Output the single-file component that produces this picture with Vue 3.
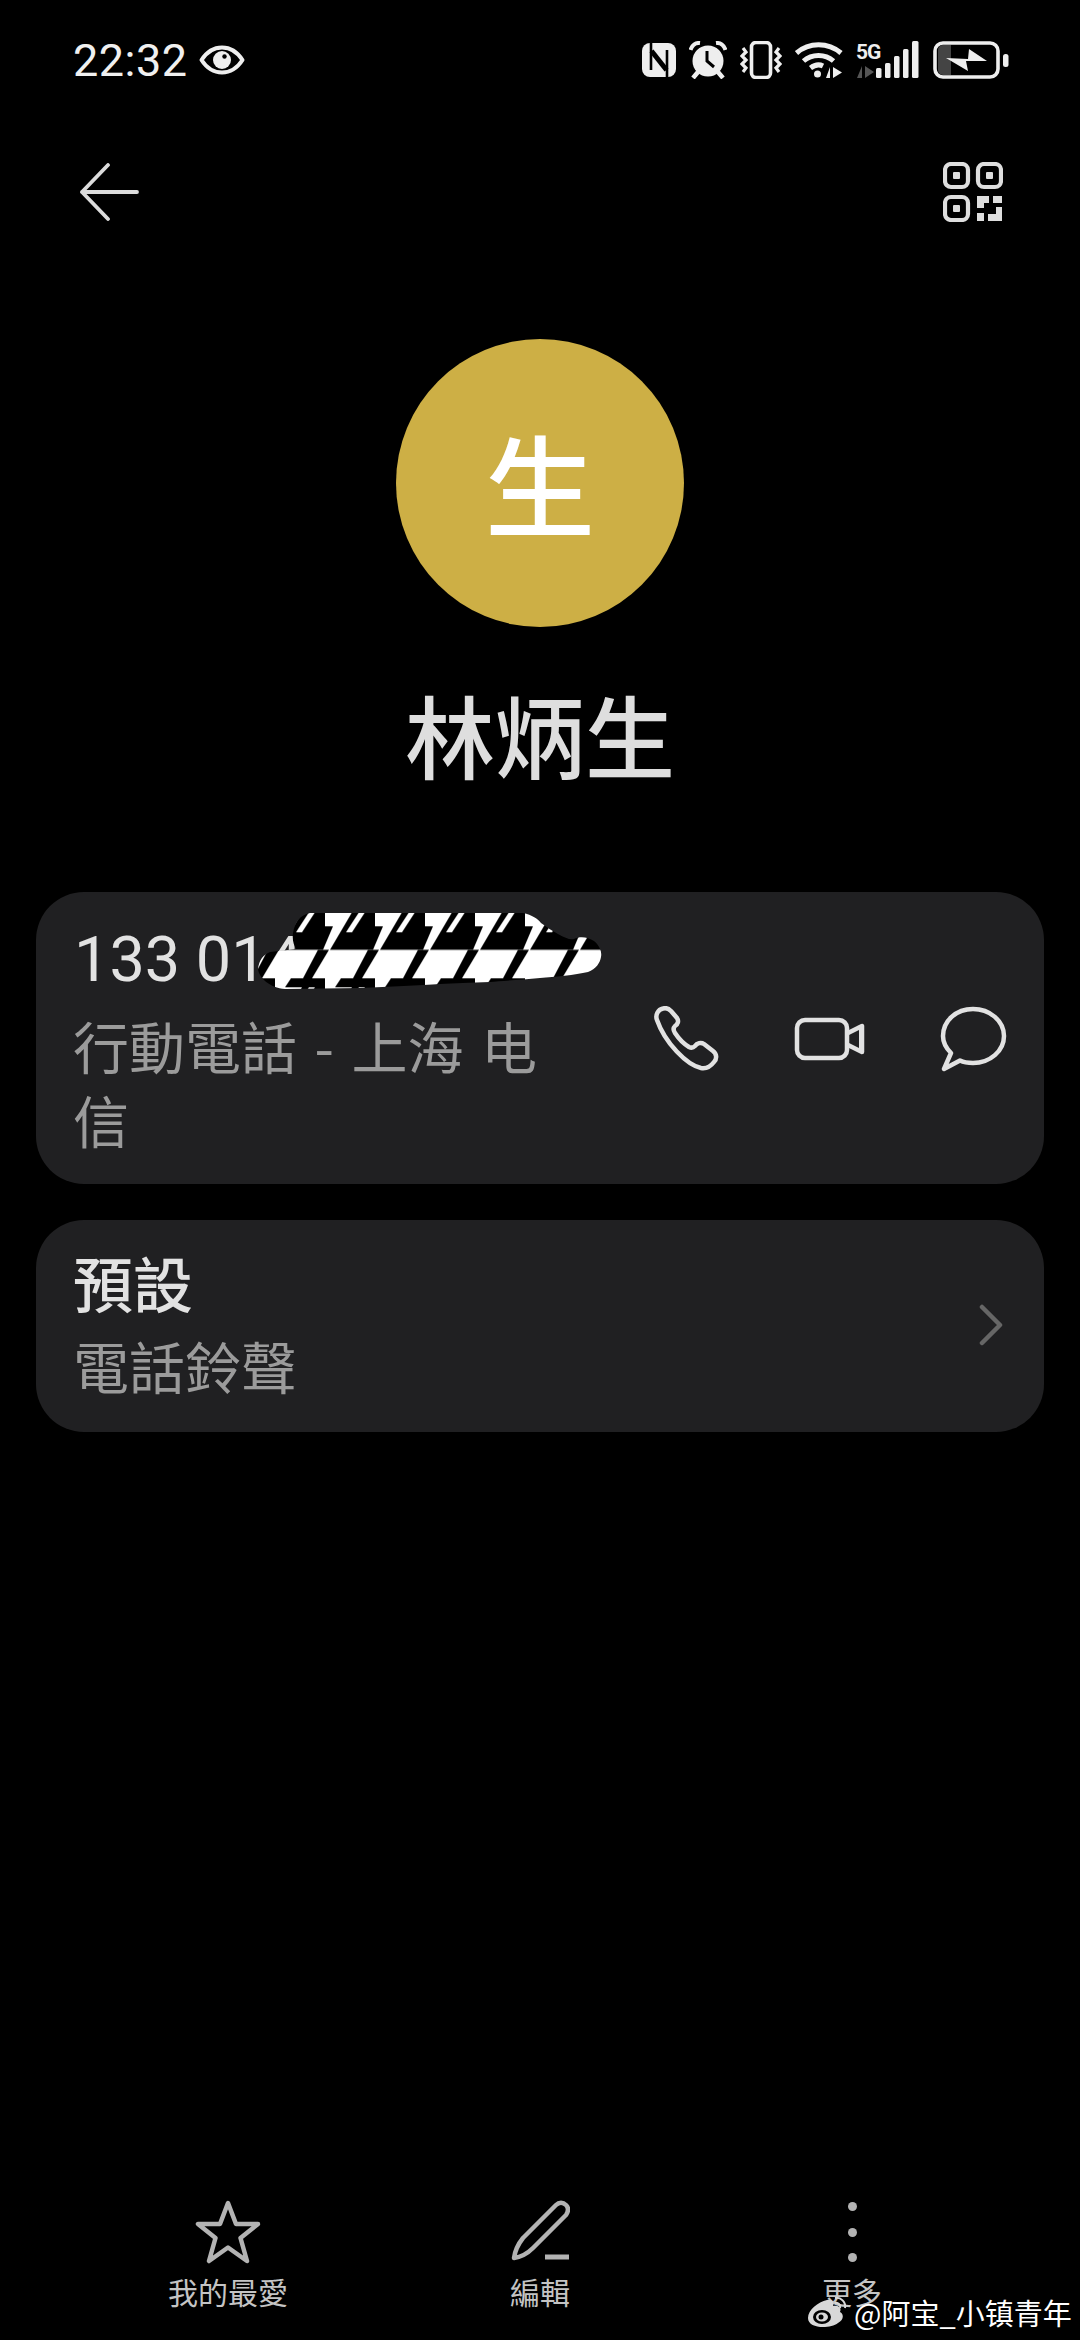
<template>
  <div class="page">
    <!-- status bar -->
    <div class="status">
      <div class="status-left">
        <span class="time">22:32</span>
        <svg class="eye" width="46" height="30" viewBox="0 0 46 30">
          <path d="M2.500 15C8 6.500 15 2.500 23 2.500S38 6.500 43.500 15C38 23.500 31 27.500 23 27.500S8 23.500 2.500 15Z" fill="none" stroke="#eee" stroke-width="4" stroke-linejoin="round" />
          <circle cx="23" cy="15" r="9" fill="#eee" />
          <circle cx="25.500" cy="11.500" r="2.200" fill="#000" />
        </svg>
      </div>
      <div class="status-right">
        <svg width="34" height="36" viewBox="0 0 34 36">
          <rect x="0" y="1" width="34" height="34" rx="8" fill="#eee" />
          <path d="M9 0V28M25 36V8" fill="none" stroke="#000" stroke-width="2.600" />
          <path d="M9.500 9L24.500 28" fill="none" stroke="#000" stroke-width="5" />
        </svg>
        <svg width="38" height="38" viewBox="0 0 38 38">
          <path d="M1.500 9C3 4 7 1.500 11 2M36.500 9C35 4 31 1.500 27 2" fill="none" stroke="#eee" stroke-width="4" />
          <circle cx="19" cy="20" r="15.500" fill="#eee" />
          <path d="M18 10V20L25 26" fill="none" stroke="#000" stroke-width="3" />
          <path d="M9 31L4 37M29 31L34 37" stroke="#eee" stroke-width="4.500" />
        </svg>
        <svg width="42" height="38" viewBox="0 0 42 38">
          <rect x="11.500" y="1.500" width="19" height="35" rx="4.500" fill="none" stroke="#eee" stroke-width="3.600" />
          <path d="M3 7L6 11L2 15L6 19L2 23L6 27L3 31M39 7L36 11L40 15L36 19L40 23L36 27L39 31" fill="none" stroke="#eee" stroke-width="3.200" />
        </svg>
        <svg width="48" height="38" viewBox="0 0 48 38">
          <path d="M1.500 12C14 1 33 1 46 12" fill="none" stroke="#eee" stroke-width="5" />
          <path d="M8.500 20C17 12.500 30 12.500 38.500 20" fill="none" stroke="#eee" stroke-width="5" />
          <path d="M15.500 27C20 23.500 25 23.500 28 25" fill="none" stroke="#eee" stroke-width="5" />
          <circle cx="22.500" cy="33" r="3.500" fill="#eee" />
          <path d="M35 26V37H31ZM38 26V37L47 31.500Z" fill="#eee" />
        </svg>
        <svg class="signal" width="64" height="38" viewBox="0 0 64 38">
          <text x="0" y="18" class="five-g">5G</text>
          <path d="M6 25V37H1ZM9 25V37L18 31Z" fill="#555" />
          <g fill="#eee">
            <rect x="20" y="27" width="5.500" height="10" rx="1.500" />
            <rect x="29" y="22" width="5.500" height="15" rx="1.500" />
            <rect x="38" y="15" width="5.500" height="22" rx="1.500" />
            <rect x="47" y="8" width="5.500" height="29" rx="1.500" />
            <rect x="56" y="0" width="6.500" height="37" rx="1.500" />
          </g>
        </svg>
        <svg width="76" height="38" viewBox="0 0 76 38">
          <rect x="2" y="2" width="63" height="34" rx="8" fill="#000" stroke="#eee" stroke-width="3.600" />
          <path d="M5 9a5 5 0 0 1 5-5H18V34H10a5 5 0 0 1-5-5Z" fill="#444" />
          <path d="M13 17L35 18L36 8L54 20L33 20L35 30Z" fill="#eee" />
          <rect x="70" y="13" width="5.500" height="13" rx="2.500" fill="#eee" />
        </svg>
      </div>
    </div>

    <!-- back / qr -->
    <div class="header">
      <svg width="60" height="58" viewBox="0 0 60 58">
        <path d="M58 29H3M29 2L3 29L29 56" fill="none" stroke="#dcdcdc" stroke-width="3.800" stroke-linecap="round" stroke-linejoin="round" />
      </svg>
      <svg width="60" height="60" viewBox="0 0 60 60">
        <g fill="none" stroke="#dedede" stroke-width="4.200">
          <rect x="2" y="2" width="23" height="23" rx="6" />
          <rect x="35" y="2" width="23" height="23" rx="6" />
          <rect x="2" y="35" width="23" height="23" rx="6" />
        </g>
        <g fill="#dedede">
          <rect x="10" y="10" width="7" height="7" rx="1" />
          <rect x="43" y="10" width="7" height="7" rx="1" />
          <rect x="10" y="43" width="7" height="7" rx="1" />
          <path d="M34 34H46V41H41V46H34ZM50 34H59V41H50ZM34 51H41V59H34ZM53 45H59V59H45V52H53Z" />
        </g>
      </svg>
    </div>

    <div class="avatar">生</div>
    <div class="name">林炳生</div>

    <!-- phone number card -->
    <div class="card card-phone">
      <div class="number">133 014</div>
      <div class="phone-row">
        <div class="sub sub-wrap">行動電話 - 上海 电信</div>
        <div class="actions">
          <div class="action">
            <svg width="66" height="66" viewBox="0 0 66 66">
              <path d="M4 14C2 9 5 3.500 10 2.500C13 1.500 16 3 18 5L24 12C26 15 25 18 22 20C20 22 20 24 22 27C26 33 31 38 36 41C38 42 40 42 42 40C44 37 48 36 51 38L60 45C64 48 64 53 61 56C58 60 54 63 48 62C34 59 12 37 4 14Z" fill="none" stroke="#e2e2e2" stroke-width="4.500" stroke-linejoin="round" />
            </svg>
          </div>
          <div class="action">
            <svg width="72" height="44" viewBox="0 0 72 44">
              <rect x="3" y="3" width="50" height="38" rx="8" fill="none" stroke="#e2e2e2" stroke-width="4.500" />
              <path d="M54 16L68 9V35L54 28" fill="none" stroke="#e2e2e2" stroke-width="4.500" stroke-linejoin="round" />
              <path d="M65 10H70V35H65Z" fill="#e2e2e2" />
            </svg>
          </div>
          <div class="action">
            <svg width="68" height="66" viewBox="0 0 68 66">
              <path d="M11 47C6 42 3 37 3 30C3 15 16 3 33 3C50 3 64 15 64 30C64 45 50 57 33 57C28 57 24 56.500 20 54.500L4 63Z" fill="none" stroke="#e2e2e2" stroke-width="4.500" stroke-linejoin="round" />
            </svg>
          </div>
        </div>
      </div>
      <!-- scribble hiding the rest of the number -->
      <svg class="scribble" width="370" height="100" viewBox="250 900 370 100">
        <defs>
          <pattern id="hound" x="300" y="912.300" width="50" height="75" patternUnits="userSpaceOnUse">
            <rect width="50" height="75" fill="#fff" />
            <path d="M2 0H25V14H33L23 37.500H-20Z" fill="#000" />
            <path d="M18 37.500H29L12 66H25V75H-15L-9 66H3Z" fill="#000" />
            <path d="M52 0H75V14H83L73 37.500H30Z" fill="#000" />
            <path d="M68 37.500H79L62 66H75V75H35L41 66H53Z" fill="#000" />
            <!-- thin white slash between the spike and the next tooth -->
            <path d="M9 0H15L2 20H-4ZM59 0H65L52 20H46Z" fill="#fff" />
          </pattern>
        </defs>
        <path d="M293 933C295 922 300 915 310 913L523 913C532 915 538 919 541 923C547 927 552 931 558 934C565 938 570 940 574 939C580 936 588 937 594 941C600 946 602 952 601 957C600 963 596 969 588 972C575 975 555 977 540 978C520 980 500 981 490 982C470 983 455 983 440 984C420 985 390 987 360 988L285 989C270 988 259 978 258 969C259 960 263 955 270 952L296 949C294 945 292 940 293 933Z" fill="url(#hound)" />
      </svg>
    </div>

    <!-- ringtone card -->
    <div class="card card-ring">
      <div>
        <div class="title">預設</div>
        <div class="sub">電話鈴聲</div>
      </div>
      <svg width="24" height="42" viewBox="0 0 24 42">
        <path d="M3 3L21 21L3 39" fill="none" stroke="#666" stroke-width="4.500" stroke-linecap="round" stroke-linejoin="round" />
      </svg>
    </div>

    <!-- bottom actions -->
    <div class="bottom">
      <div class="tab">
        <svg width="66" height="64" viewBox="0 0 66 64">
          <path d="M33 3L41 24H63L45.500 38L52 61L33 47.500L14 61L20.500 38L3 24H25Z" fill="none" stroke="#b3b3b3" stroke-width="4.500" stroke-linejoin="round" />
        </svg>
        <span>我的最愛</span>
      </div>
      <div class="tab">
        <svg width="60" height="64" viewBox="0 0 60 64">
          <path d="M4 58C5 51 9 43 13 38L46 5C49 2 53 2 56 5C59 8 58 12 56 15L23 48C18 53 11 57 4 58Z" fill="none" stroke="#b3b3b3" stroke-width="4.500" stroke-linejoin="round" />
          <path d="M35 57H59" stroke="#b3b3b3" stroke-width="5" />
        </svg>
        <span>編輯</span>
      </div>
      <div class="tab">
        <div class="dots">
          <i></i><i></i><i></i>
        </div>
        <span>更多</span>
      </div>
    </div>

    <!-- weibo watermark -->
    <div class="watermark">
      <svg width="42" height="32" viewBox="0 0 42 32">
        <path d="M2 22C2 14 12 6 21 4C27 3 28 7 27 10C32 9 36 11 34 16C38 18 38 24 32 27C24 33 2 33 2 22Z" fill="#d8d8d8" />
        <ellipse cx="16" cy="21" rx="9" ry="7" fill="#000" />
        <ellipse cx="16" cy="21" rx="6" ry="4.500" fill="#d8d8d8" />
        <circle cx="15" cy="21" r="2.500" fill="#000" />
        <path d="M29 2C35 1 40 6 39 12M29 7C32 6 35 9 34 12" fill="none" stroke="#d8d8d8" stroke-width="2" />
      </svg>
      <span>@阿宝_小镇青年</span>
    </div>
  </div>
</template>

<script setup>
</script>

<style scoped>
.page {
  position: relative;
  width: 1080px;
  height: 2340px;
  background: #000;
  display: flex;
  flex-direction: column;
  font-family: "Noto Sans CJK TC", "Noto Sans", sans-serif;
  overflow: hidden;
}
.status {
  height: 120px;
  padding: 0 71px 0 73px;
  display: flex;
  justify-content: space-between;
  align-items: center;
}
.status-left {
  display: flex;
  align-items: center;
  gap: 11px;
}
.time {
  font-family: Roboto, sans-serif;
  font-size: 45px;
  color: #f0f0f0;
  letter-spacing: 0.5px;
}
.status-right {
  display: flex;
  align-items: center;
  gap: 13px;
}
.signal {
  overflow: visible;
}
.five-g {
  font-family: Roboto, sans-serif;
  font-size: 21px;
  font-weight: 700;
  fill: #eee;
  letter-spacing: -1px;
}
.header {
  height: 144px;
  padding: 0 77px 0 79px;
  display: flex;
  justify-content: space-between;
  align-items: center;
}
.avatar {
  width: 288px;
  height: 288px;
  margin: 75px auto 0;
  padding-bottom: 5px;
  box-sizing: border-box;
  border-radius: 50%;
  background: #cdaf45;
  color: #fff;
  font-size: 110px;
  font-weight: 500;
  display: flex;
  align-items: center;
  justify-content: center;
}
.name {
  margin-top: 51px;
  height: 110px;
  line-height: 110px;
  text-align: center;
  font-size: 90px;
  font-weight: 500;
  color: #dedede;
}
.card {
  margin: 0 36px;
  background: #202022;
  border-radius: 48px;
}
.card-phone {
  position: relative;
  margin-top: 104px;
  height: 292px;
  padding: 33px 0 0 38px;
  box-sizing: border-box;
}
.number {
  font-family: Roboto, sans-serif;
  font-size: 63px;
  line-height: 70px;
  color: #e2e2e2;
  margin-bottom: 13px;
}
.phone-row {
  display: flex;
  align-items: flex-start;
  justify-content: space-between;
}
.sub {
  font-size: 56px;
  line-height: 74px;
  color: #9b9b9b;
}
.sub-wrap {
  width: 480px;
  margin-left: -1px;
  word-spacing: 5px;
}
.actions {
  display: flex;
  margin-top: -2px;
  margin-right: -2px;
}
.action {
  width: 144px;
  height: 66px;
  display: flex;
  align-items: center;
  justify-content: center;
}
.scribble {
  position: absolute;
  left: 214px;
  top: 8px;
}
.card-ring {
  margin-top: 36px;
  height: 212px;
  padding: 26px 41px 0 37px;
  box-sizing: border-box;
  display: flex;
  justify-content: space-between;
}
.card-ring svg {
  margin-top: 58px;
}
.title {
  font-size: 60px;
  font-weight: 500;
  line-height: 72px;
  color: #e2e2e2;
  margin-bottom: 10px;
}
.bottom {
  margin-top: auto;
  padding: 0 72px 29px;
  display: grid;
  grid-template-columns: repeat(3, 312px);
}
.tab {
  display: flex;
  flex-direction: column;
  align-items: center;
  gap: 7px;
  color: #c4c4c4;
  font-size: 30px;
  line-height: 40px;
}
.tab svg,
.dots {
  height: 64px;
}
.dots {
  display: flex;
  flex-direction: column;
  align-items: center;
  justify-content: space-between;
  padding: 2px 0;
  box-sizing: border-box;
}
.dots i {
  width: 9px;
  height: 9px;
  border-radius: 50%;
  background: #b3b3b3;
}
.watermark {
  position: absolute;
  left: 806px;
  top: 2294px;
  display: flex;
  align-items: center;
  gap: 6px;
  font-family: "Noto Sans CJK SC", sans-serif;
  font-size: 29px;
  line-height: 36px;
  color: #fff;
  white-space: nowrap;
}
</style>

<style>
html,
body {
  background: #000;
}
</style>
